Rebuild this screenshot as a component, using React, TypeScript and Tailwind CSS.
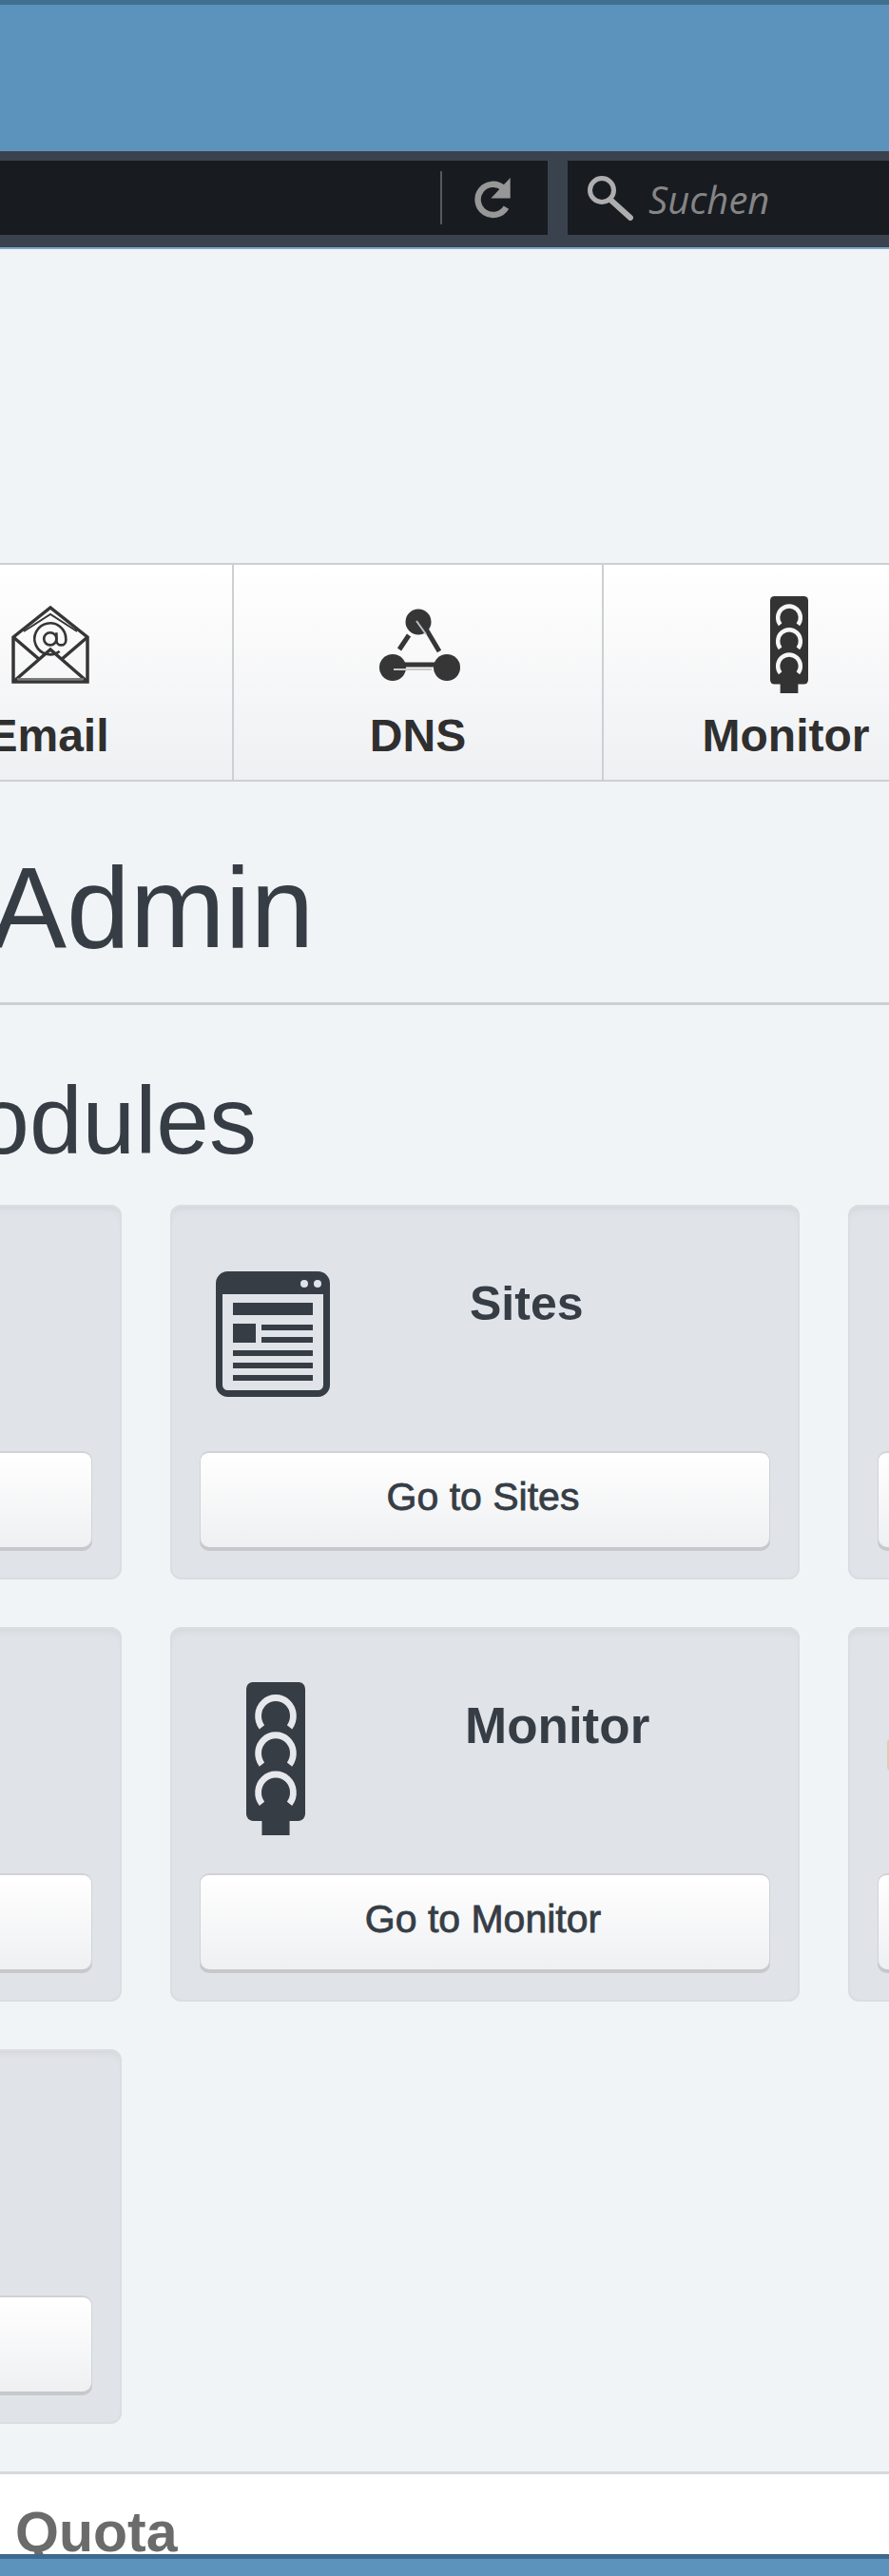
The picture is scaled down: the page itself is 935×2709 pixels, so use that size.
import React from "react";

function ReloadIcon() {
  return (
    <svg width="43" height="45" viewBox="0 0 40 42" fill="none">
      <path d="M30 11A15 15 0 1 0 33 30" stroke="#979797" strokeWidth="6" />
      <path d="M37 1V21H18Z" fill="#979797" />
    </svg>
  );
}

function SearchIcon() {
  return (
    <svg width="48" height="48" viewBox="0 0 48 48" fill="none">
      <circle cx="15" cy="16" r="12.5" stroke="#aeaeae" strokeWidth="5" />
      <path d="M24 26L45 45" stroke="#aeaeae" strokeWidth="6" strokeLinecap="round" />
    </svg>
  );
}

function EmailIcon() {
  return (
    <svg className="ml-[5px]" width="82" height="82" viewBox="0 0 82 82" fill="none" stroke="#363636" strokeWidth="3.5">
      <path d="M2 33L41 2L80 33V80H2Z" strokeLinejoin="miter" />
      <path d="M2 33L30 57M80 33L52 57M2 80L41 46L80 80" />
      <path d="M13 27L41 9L69 27" strokeWidth="2" />
      <g transform="translate(21 15) scale(1.65)" strokeWidth="1.6">
        <circle cx="12" cy="12" r="4" />
        <path d="M16 8v5a3 3 0 0 0 6 0v-1a10 10 0 1 0-4 8" />
      </g>
      <path d="M6 77H76" strokeWidth="2" stroke="#7a7a7a" />
    </svg>
  );
}

function DnsIcon() {
  return (
    <svg className="ml-[2px]" width="90" height="80" viewBox="0 0 90 80" fill="none">
      <circle cx="44" cy="16" r="13.5" fill="#363636" />
      <circle cx="17" cy="64" r="14" fill="#363636" />
      <circle cx="74" cy="64" r="14" fill="#363636" />
      <path d="M47 15L66 47" stroke="#363636" strokeWidth="5" />
      <path d="M34 30L24 45" stroke="#363636" strokeWidth="5" />
      <path d="M22 61H62" stroke="#363636" strokeWidth="5" />
      <path d="M18 66H58" stroke="#c9c9c9" strokeWidth="2" />
      <path d="M42 15L52 29" stroke="#b9c2c9" strokeWidth="2" />
    </svg>
  );
}

function TrafficLightIcon({ w, h, color, ring }: { w: number; h: number; color: string; ring: string }) {
  return (
    <svg width={w} height={h} viewBox="0 0 64 160" fill="none" preserveAspectRatio="none">
      <rect x="0" y="0" width="64" height="145" rx="7" fill={color} />
      <rect x="17" y="140" width="30" height="20" fill={color} />
      {[33, 72, 113].map((y) => (
        <path key={y} d={`M17 ${y + 14}A19 19 0 1 1 47 ${y + 14}`} stroke={ring} strokeWidth="7" />
      ))}
    </svg>
  );
}

function SitesIcon() {
  return (
    <svg width="120" height="132" viewBox="0 0 120 132" fill="none">
      <rect x="3.5" y="3.5" width="113" height="125" rx="9" stroke="#363d45" strokeWidth="7" />
      <path d="M3 12a9 9 0 0 1 9-9h96a9 9 0 0 1 9 9v12H3Z" fill="#363d45" />
      <circle cx="93" cy="13" r="4" fill="#e0e3e8" />
      <circle cx="107" cy="13" r="4" fill="#e0e3e8" />
      <rect x="18" y="33" width="84" height="13" fill="#363d45" />
      <rect x="18" y="55" width="24" height="20" fill="#363d45" />
      <rect x="48" y="56" width="54" height="6" fill="#363d45" />
      <rect x="48" y="69" width="54" height="6" fill="#363d45" />
      <rect x="18" y="83" width="84" height="6" fill="#363d45" />
      <rect x="18" y="96" width="84" height="6" fill="#363d45" />
      <rect x="18" y="109" width="84" height="6" fill="#363d45" />
    </svg>
  );
}

function NavTab({ icon, label, last }: { icon: React.ReactNode; label: string; last?: boolean }) {
  return (
    <div className={`w-[389px] shrink-0 flex flex-col items-center border-[#ccd0d3] ${last ? "" : "border-r-2"}`}>
      <div className="h-[150px] pt-[18px] flex items-center justify-center">{icon}</div>
      <div className={`text-[48px] leading-[54px] font-bold text-[#2f2f2f] mt-[3px] ${last ? "mr-[6px]" : ""}`}>{label}</div>
    </div>
  );
}

function ModuleCard({ children, label }: { children?: React.ReactNode; label?: string }) {
  return (
    <div className="h-[394px] flex flex-col justify-between rounded-[12px] bg-[#e0e3e8] shadow-[inset_0_0_0_2px_#dadde1,inset_0_8px_8px_-5px_#cfd2d6]">
      <div>{children}</div>
      <div className="px-[31px] pb-[34px]">
        <div className="h-[101px] rounded-[10px] border-t-2 border-x border-[#d0d2d5] bg-gradient-to-b from-white to-[#eff0f2] shadow-[0_4px_0_#c6c8cb] flex items-center justify-center text-[41px] text-[#363d45] [-webkit-text-stroke:0.8px_#363d45] pb-[6px] pr-[4px]">
          {label}
        </div>
      </div>
    </div>
  );
}

export default function App() {
  return (
    <div className="w-[935px] h-[2709px] overflow-hidden bg-[#f1f4f7] font-['Liberation_Sans',Arial,sans-serif] text-[#363d45]">
      {/* Browser chrome */}
      <div className="h-[159px] bg-[#5b93bc] border-t-[5px] border-[#40708f]" />
      <div className="h-[103px] bg-[#3a424e] pt-[10px] border-b-2 border-[#7fa9c6]">
        <div className="flex gap-[21px] h-[78px]">
          <div className="w-[576px] bg-[#181b20] flex items-center justify-end">
            <div className="w-[2px] h-[56px] bg-[#555a60] mr-[32px]" />
            <div className="mr-[36px]"><ReloadIcon /></div>
          </div>
          <div className="flex-1 bg-[#181b20] flex items-center pl-[21px] gap-[16px]">
            <SearchIcon />
            <span className="font-['Open_Sans',sans-serif] italic text-[40px] text-[#858585] leading-none mt-[4px]">Suchen</span>
          </div>
        </div>
      </div>

      {/* Nav tabs */}
      <div className="mt-[330px] h-[230px] border-y-2 border-[#ccd0d3] bg-gradient-to-b from-white to-[#eff0f2] flex -ml-[143px] w-[1078px]">
        <NavTab icon={<EmailIcon />} label="Email" />
        <NavTab icon={<DnsIcon />} label="DNS" />
        <NavTab icon={<TrafficLightIcon w={40} h={102} color="#333" ring="#f5f6f7" />} label="Monitor" last />
      </div>

      {/* Page title */}
      <h1 className="mt-[65px] text-[120px] leading-[134px] -ml-[10px] text-[#363d45]">Admin</h1>
      <div className="mt-[33px] h-[3px] bg-[#cdd0d3]" />
      <h2 className="mt-[65px] text-[100px] leading-[112px] -ml-[108px] text-[#363d45]">Modules</h2>

      {/* Module cards */}
      <div className="mt-[33px] -ml-[534px] w-[2088px] grid grid-cols-[repeat(3,662px)] gap-x-[51px] gap-y-[50px]">
        <ModuleCard />
        <ModuleCard label="Go to Sites">
          <div className="flex items-start pl-[48px]">
            <div className="mt-[70px]"><SitesIcon /></div>
            <div className="ml-[147px] mt-[75px] text-[50px] leading-[58px] font-bold">Sites</div>
          </div>
        </ModuleCard>
        <ModuleCard />
        <ModuleCard />
        <ModuleCard label="Go to Monitor">
          <div className="flex items-start pl-[80px]">
            <div className="mt-[58px]"><TrafficLightIcon w={62} h={161} color="#363d45" ring="#e6e8ec" /></div>
            <div className="ml-[168px] mt-[75px] text-[53px] leading-[58px] font-bold">Monitor</div>
          </div>
        </ModuleCard>
        <ModuleCard>
          <div className="ml-[41px] mt-[118px] w-[4px] h-[33px] rounded-l-[4px] bg-[#e3c9b0]" />
        </ModuleCard>
        <ModuleCard />
      </div>

      {/* Quota panel */}
      <div className="mt-[50px] h-[87px] border-t-[3px] border-[#d6d9dc] bg-white overflow-hidden">
        <div className="mt-[28px] -ml-[125px] text-[59px] leading-[66px] font-bold text-[#6b6b6b]">Disk Quota</div>
      </div>
      <div className="h-[24px] bg-[#5b93bc] border-t-[5px] border-[#3e6a8e]" />
    </div>
  );
}
